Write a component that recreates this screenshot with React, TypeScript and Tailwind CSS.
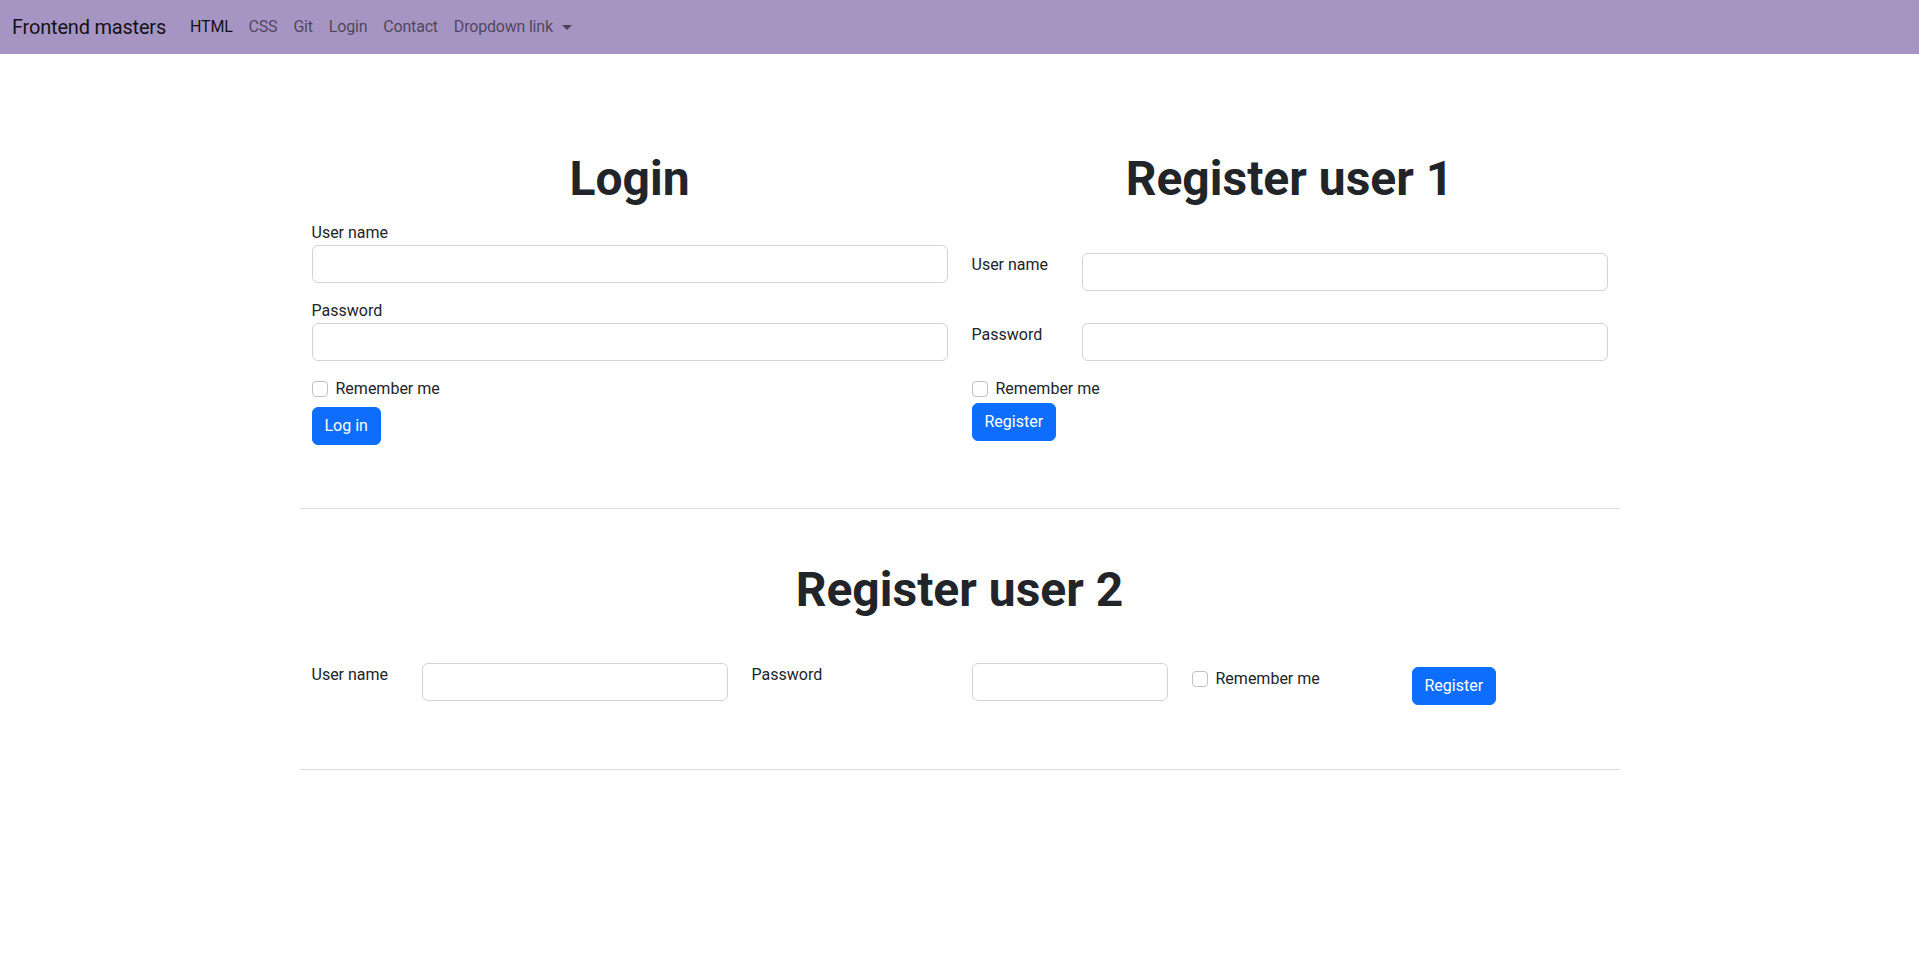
import React from 'react'

const font = "font-['Roboto','Noto_Sans',sans-serif]"

function Field({ label }: { label: string }) {
  return (
    <input
      aria-label={label}
      className="block w-full h-[38px] rounded-[6px] border border-[#ced4da] bg-white px-3 text-base outline-none"
    />
  )
}

function Check() {
  return (
    <div className="flex items-start h-6">
      <span className="mt-1 w-4 h-4 shrink-0 rounded-[4px] border border-[#bfc1c4] bg-white" />
      <label className="ml-2 leading-6">Remember me</label>
    </div>
  )
}

function Btn({ children }: { children: React.ReactNode }) {
  return (
    <button className="h-[38px] px-3 rounded-[6px] border border-[#0d6efd] bg-[#0d6efd] text-white text-base leading-6">
      {children}
    </button>
  )
}

const links = ['HTML', 'CSS', 'Git', 'Login', 'Contact']

export default function App() {
  return (
    <div className={`min-h-screen bg-white text-[#212529] text-base ${font}`}>
      <nav className="h-[54px] bg-[#a694c2] flex items-center px-3 tracking-[-0.2px]">
        <a className="text-[20px] leading-[30px] py-[5px] mr-4 text-black/90">Frontend masters</a>
        <ul className="flex items-center">
          {links.map((l, i) => (
            <li key={l}>
              <a className={`block px-2 py-2 leading-6 ${i === 0 ? 'text-black/90' : 'text-black/55'}`}>{l}</a>
            </li>
          ))}
          <li>
            <a className="flex items-center px-2 py-2 leading-6 text-black/55">
              Dropdown link
              <span className="ml-[9px] w-0 h-0 border-t-[5px] border-x-[5px] border-x-transparent border-t-black/55" />
            </a>
          </li>
        </ul>
      </nav>

      <main className="w-[1320px] mx-auto">
        <div className="grid grid-cols-2 pt-[96px]">
          {/* login */}
          <div className="px-3">
            <h1 className="text-[48px] font-bold leading-[1.2] text-center mb-[13px]">Login</h1>
            <label className="block leading-6">User name</label>
            <Field label="User name" />
            <label className="block leading-6 mt-4">Password</label>
            <Field label="Password" />
            <div className="mt-4">
              <Check />
            </div>
            <div className="mt-[6px]">
              <Btn>Log in</Btn>
            </div>
          </div>

          {/* register 1 */}
          <div className="px-3">
            <h1 className="text-[48px] font-bold leading-[1.2] text-center">Register user 1</h1>
            <div className="flex mt-[45px]">
              <label className="w-[110px] shrink-0 leading-6">User name</label>
              <Field label="User name" />
            </div>
            <div className="flex mt-8">
              <label className="w-[110px] shrink-0 leading-6">Password</label>
              <Field label="Password" />
            </div>
            <div className="mt-4">
              <Check />
            </div>
            <div className="mt-[2px]">
              <Btn>Register</Btn>
            </div>
          </div>
        </div>

        <hr className="mt-[63px] border-0 h-px bg-[#dcdde0]" />

        <h1 className="text-[48px] font-bold leading-[1.2] text-center mt-[52px]">Register user 2</h1>
        <div className="grid grid-cols-12 mt-[45px]">
          <div className="col-span-1 px-3">
            <label className="block leading-6">User name</label>
          </div>
          <div className="col-span-3 px-3">
            <Field label="User name" />
          </div>
          <div className="col-span-2 px-3">
            <label className="block leading-6">Password</label>
          </div>
          <div className="col-span-2 px-3">
            <Field label="Password" />
          </div>
          <div className="col-span-2 px-3 mt-1">
            <Check />
          </div>
          <div className="col-span-2 px-3 mt-1">
            <Btn>Register</Btn>
          </div>
        </div>

        <hr className="mt-[64px] border-0 h-px bg-[#dcdde0]" />
      </main>
    </div>
  )
}
